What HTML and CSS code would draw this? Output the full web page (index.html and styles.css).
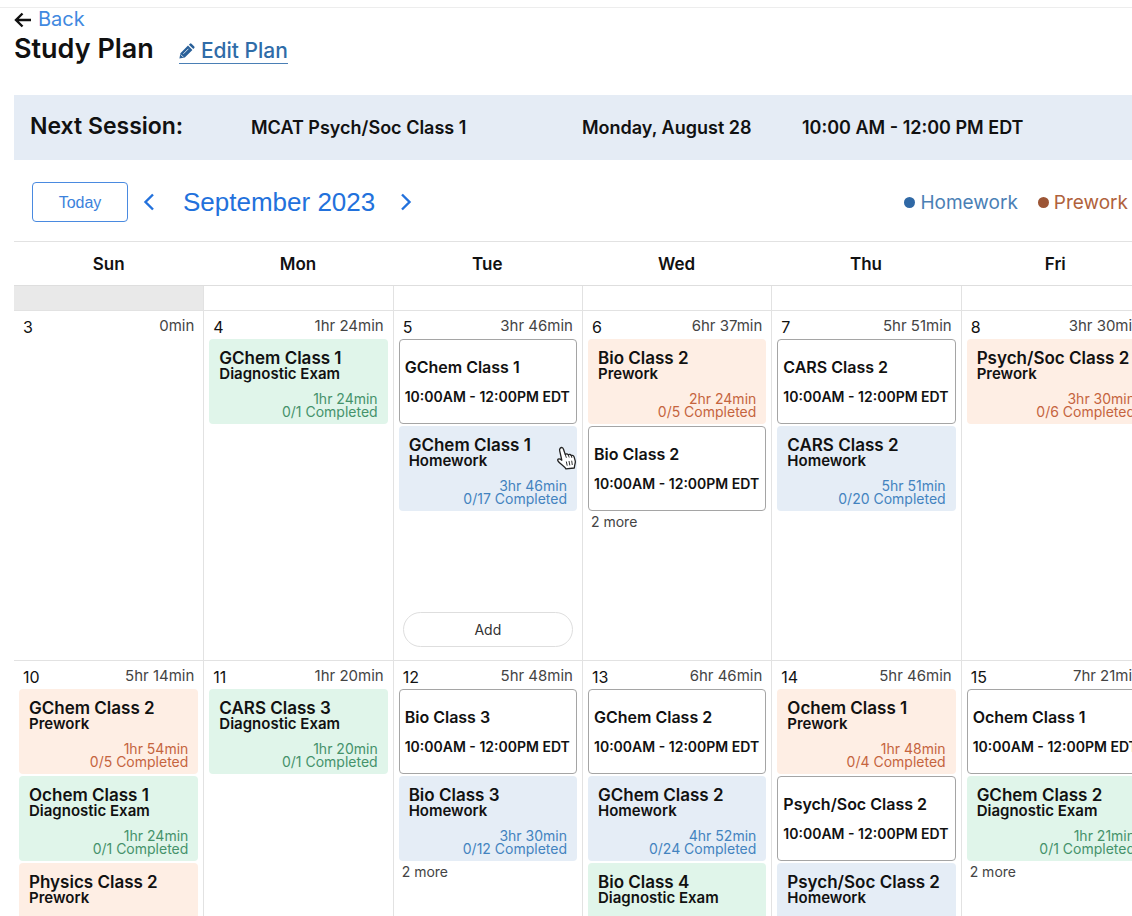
FILE: index.html
```html
<!DOCTYPE html>
<html lang="en">
<head>
    <meta charset="UTF-8">
    <meta name="viewport" content="width=device-width, initial-scale=1.0">
    <title>Study Plan</title>
    <link rel="stylesheet" href="styles.css">
</head>
<body>
    <div class="page">
        <header class="page-header">
            <a href="#" class="back-link">
                <svg class="back-icon" width="17" height="16" viewBox="0 0 17 16" fill="none" stroke="#111" stroke-width="2.4"><path d="M8.5 1.5L2 8l6.5 6.5M2 8h15"/></svg>
                Back
            </a>
            <div class="title-row">
                <h1>Study Plan</h1>
                <a href="#" class="edit-link">
                    <svg width="16" height="16" viewBox="0 0 16 16"><path fill="#2a6099" d="M0.4 15.600l1-5.400 7.600-7.600 4.400 4.400-7.600 7.600zM9.900 1.700l1-1q.8-.7 1.600 0l2.800 2.800q.7.8 0 1.600l-1 1z"/><path d="M1.800 11.600l2.600 2.600M4.400 10.800l5-5" stroke="#fff" stroke-width=".8" fill="none"/></svg>
                    Edit Plan
                </a>
            </div>
        </header>

        <section class="next-session">
            <h2>Next Session:</h2>
            <span>MCAT Psych/Soc Class 1</span>
            <span>Monday, August 28</span>
            <span>10:00 AM - 12:00 PM EDT</span>
        </section>

        <div class="toolbar">
            <button type="button" class="today">Today</button>
            <button type="button" class="arrow" aria-label="Previous month">
                <svg width="12" height="18" viewBox="0 0 12 18"><path d="M10 1.500L2.500 9l7.500 7.500"/></svg>
            </button>
            <span class="month">September 2023</span>
            <button type="button" class="arrow" aria-label="Next month">
                <svg width="12" height="18" viewBox="0 0 12 18"><path d="M2 1.500L9.500 9 2 16.500"/></svg>
            </button>
            <div class="legend">
                <span class="legend-item homework-key">Homework</span>
                <span class="legend-item prework-key">Prework</span>
            </div>
        </div>

        <table class="calendar">
            <thead>
                <tr><th>Sun</th><th>Mon</th><th>Tue</th><th>Wed</th><th>Thu</th><th>Fri</th></tr>
            </thead>
            <tbody>
                <!-- tail of the previous week -->
                <tr class="past-week">
                    <td class="outside"></td><td></td><td></td><td></td><td></td><td></td>
                </tr>
                <tr>
                    <td>
                        <div class="day">
                            <div class="day-head"><span class="date">3</span><span class="total">0min</span></div>
                        </div>
                    </td>
                    <td>
                        <div class="day">
                            <div class="day-head"><span class="date">4</span><span class="total">1hr 24min</span></div>
                            <a href="#" class="task exam"><b>GChem Class 1</b><strong>Diagnostic Exam</strong><span>1hr 24min<br>0/1 Completed</span></a>
                        </div>
                    </td>
                    <td>
                        <div class="day">
                            <div class="day-head"><span class="date">5</span><span class="total">3hr 46min</span></div>
                            <a href="#" class="session"><b>GChem Class 1</b><strong>10:00AM - 12:00PM EDT</strong></a>
                            <a href="#" class="task homework"><b>GChem Class 1</b><strong>Homework</strong><span>3hr 46min<br>0/17 Completed</span>
                                <svg class="pointer" width="21" height="24" viewBox="0 0 21 24"><path d="M4.200 2.200C5.500.9 7 1.700 7.400 3l1.900 5.600c.8-1 2.500-.9 3 .3 1-.8 2.500-.5 2.900.7 1.300-.6 2.500 0 2.900 1.300l1.200 4.300c.3 1.600-.5 3-.7 4.600l-.3 2.200-8.400.9c-1-2-3.700-3.800-5.500-5.400-1.300-1.200-3.400-2.700-2.600-4 .9-1.200 2.600-.3 4 .7L3.700 4.900c-.3-1-.2-2 .5-2.700z" fill="#fff" stroke="#222" stroke-width="1.300" stroke-linejoin="round"/><path d="M9.300 8.600l1.100 3.200M12.300 8.900l.9 2.600M15.200 9.600l.7 2.300M10.300 15.500l.9 4.200M13 15l.8 4.400M15.700 14.700l.6 4.300" fill="none" stroke="#333"/></svg>
                            </a>
                            <button type="button" class="add">Add</button>
                        </div>
                    </td>
                    <td>
                        <div class="day">
                            <div class="day-head"><span class="date">6</span><span class="total">6hr 37min</span></div>
                            <a href="#" class="task prework"><b>Bio Class 2</b><strong>Prework</strong><span>2hr 24min<br>0/5 Completed</span></a>
                            <a href="#" class="session"><b>Bio Class 2</b><strong>10:00AM - 12:00PM EDT</strong></a>
                            <a href="#" class="more">2 more</a>
                        </div>
                    </td>
                    <td>
                        <div class="day">
                            <div class="day-head"><span class="date">7</span><span class="total">5hr 51min</span></div>
                            <a href="#" class="session"><b>CARS Class 2</b><strong>10:00AM - 12:00PM EDT</strong></a>
                            <a href="#" class="task homework"><b>CARS Class 2</b><strong>Homework</strong><span>5hr 51min<br>0/20 Completed</span></a>
                        </div>
                    </td>
                    <td>
                        <div class="day">
                            <div class="day-head"><span class="date">8</span><span class="total">3hr 30min</span></div>
                            <a href="#" class="task prework"><b>Psych/Soc Class 2</b><strong>Prework</strong><span>3hr 30min<br>0/6 Completed</span></a>
                        </div>
                    </td>
                </tr>
                <tr>
                    <td>
                        <div class="day">
                            <div class="day-head"><span class="date">10</span><span class="total">5hr 14min</span></div>
                            <a href="#" class="task prework"><b>GChem Class 2</b><strong>Prework</strong><span>1hr 54min<br>0/5 Completed</span></a>
                            <a href="#" class="task exam"><b>Ochem Class 1</b><strong>Diagnostic Exam</strong><span>1hr 24min<br>0/1 Completed</span></a>
                            <a href="#" class="task prework"><b>Physics Class 2</b><strong>Prework</strong></a>
                        </div>
                    </td>
                    <td>
                        <div class="day">
                            <div class="day-head"><span class="date">11</span><span class="total">1hr 20min</span></div>
                            <a href="#" class="task exam"><b>CARS Class 3</b><strong>Diagnostic Exam</strong><span>1hr 20min<br>0/1 Completed</span></a>
                        </div>
                    </td>
                    <td>
                        <div class="day">
                            <div class="day-head"><span class="date">12</span><span class="total">5hr 48min</span></div>
                            <a href="#" class="session"><b>Bio Class 3</b><strong>10:00AM - 12:00PM EDT</strong></a>
                            <a href="#" class="task homework"><b>Bio Class 3</b><strong>Homework</strong><span>3hr 30min<br>0/12 Completed</span></a>
                            <a href="#" class="more">2 more</a>
                        </div>
                    </td>
                    <td>
                        <div class="day">
                            <div class="day-head"><span class="date">13</span><span class="total">6hr 46min</span></div>
                            <a href="#" class="session"><b>GChem Class 2</b><strong>10:00AM - 12:00PM EDT</strong></a>
                            <a href="#" class="task homework"><b>GChem Class 2</b><strong>Homework</strong><span>4hr 52min<br>0/24 Completed</span></a>
                            <a href="#" class="task exam"><b>Bio Class 4</b><strong>Diagnostic Exam</strong></a>
                        </div>
                    </td>
                    <td>
                        <div class="day">
                            <div class="day-head"><span class="date">14</span><span class="total">5hr 46min</span></div>
                            <a href="#" class="task prework"><b>Ochem Class 1</b><strong>Prework</strong><span>1hr 48min<br>0/4 Completed</span></a>
                            <a href="#" class="session"><b>Psych/Soc Class 2</b><strong>10:00AM - 12:00PM EDT</strong></a>
                            <a href="#" class="task homework"><b>Psych/Soc Class 2</b><strong>Homework</strong></a>
                        </div>
                    </td>
                    <td>
                        <div class="day">
                            <div class="day-head"><span class="date">15</span><span class="total">7hr 21min</span></div>
                            <a href="#" class="session"><b>Ochem Class 1</b><strong>10:00AM - 12:00PM EDT</strong></a>
                            <a href="#" class="task exam"><b>GChem Class 2</b><strong>Diagnostic Exam</strong><span>1hr 21min<br>0/1 Completed</span></a>
                            <a href="#" class="more">2 more</a>
                        </div>
                    </td>
                </tr>
            </tbody>
        </table>
    </div>
</body>
</html>
```

FILE: styles.css
```css
* {
    box-sizing: border-box;
}
body {
    margin: 0;
    height: 100vh;
    overflow: hidden;
    background-color: #fff;
    color: #111;
    font-family: Inter, "Liberation Sans", sans-serif;
}
a {
    color: inherit;
    text-decoration: none;
}
button {
    font-family: inherit;
    background-color: #fff;
    cursor: pointer;
}
h1, h2 {
    margin: 0;
    font-weight: 600;
}
.page {
    margin-top: 7px;
    padding-left: 14px;
    border-top: 1px solid #ededed;
}

/* Header */
.page-header {
    padding-bottom: 28px;
}
.back-link {
    display: flex;
    align-items: center;
    gap: 7px;
    line-height: 23px;
    font-size: 20px;
    color: #4189e0;
}
.title-row {
    display: flex;
    align-items: center;
    gap: 25px;
}
h1 {
    font-size: 27px;
    line-height: 36px;
}
.edit-link {
    display: flex;
    align-items: center;
    gap: 6px;
    margin-top: 5px;
    border-bottom: 1px solid #4a7fb5;
    font-size: 21px;
    font-weight: 500;
    line-height: 24px;
    color: #2f6ca8;
}

/* Next session */
.next-session {
    display: grid;
    grid-template-columns: 221px 331px 220px 1fr;
    align-items: center;
    height: 65px;
    padding-left: 16px;
    background-color: #e5ecf5;
    font-size: 18px;
    font-weight: 600;
    white-space: nowrap;
}
.next-session h2 {
    font-size: 23px;
    padding-bottom: 4px;
}

/* Toolbar */
.toolbar {
    display: flex;
    align-items: center;
    height: 81px;
    padding: 3px 4px 0 18px;
    color: #2271dc;
    font-family: "Liberation Sans", sans-serif;
}
.today {
    width: 96px;
    height: 40px;
    padding-top: 2px;
    border: 1px solid #4a8ae0;
    border-radius: 4px;
    color: #3c82dc;
    font-size: 16px;
}
.arrow {
    display: flex;
    padding: 0 15px;
    border: none;
}
.arrow svg {
    fill: none;
    stroke: #2271dc;
    stroke-width: 2.4;
}
.month {
    margin: 0 10px 0 13px;
    font-size: 26px;
}
.legend {
    display: flex;
    gap: 20px;
    margin-left: auto;
    font-family: Inter, "Liberation Sans", sans-serif;
    font-size: 19px;
}
.legend-item {
    display: flex;
    align-items: center;
    gap: 5px;
}
.legend-item::before {
    content: "";
    width: 11px;
    height: 11px;
    border-radius: 50%;
}
.homework-key {
    color: #4a80b5;
}
.homework-key::before {
    background-color: #2f68a5;
}
.prework-key {
    color: #b0623c;
}
.prework-key::before {
    background-color: #9c5535;
}

/* Calendar, runs past the right edge of the window */
.calendar {
    width: calc(100% + 18px);
    table-layout: fixed;
    border-spacing: 0;
    border-top: 1px solid #e2e2e2;
}
.calendar th {
    height: 44px;
    padding: 0;
    border-bottom: 1px solid #dedede;
    font-size: 17px;
    font-weight: 600;
}
.calendar td {
    padding: 0;
    border-left: 1px solid #e2e2e2;
    border-bottom: 1px solid #e2e2e2;
    vertical-align: top;
}
.calendar td:first-child {
    border-left: none;
}
.calendar .past-week td {
    height: 25px;
}
.calendar .outside {
    background-color: #e9e9e9;
}
.day {
    display: flex;
    flex-direction: column;
    gap: 2px;
    min-height: 349px;
    padding: 0 5px;
}
.day-head {
    display: flex;
    justify-content: space-between;
    padding: 5px 4px 0;
    margin-bottom: -2px;
}
.date {
    font-size: 16px;
    line-height: 23px;
}
.total {
    font-size: 15px;
    line-height: 20px;
    color: #444;
}
.task, .session {
    display: flex;
    flex-direction: column;
    height: 85px;
    border-radius: 4px;
    white-space: nowrap;
}
.task {
    position: relative;
    padding: 10px 10px 6px;
}
.task b {
    font-size: 17px;
    font-weight: 600;
    line-height: 18px;
}
.task strong {
    font-size: 15px;
    font-weight: 600;
    line-height: 13px;
}
.task span {
    margin-top: 12px;
    font-size: 14px;
    line-height: 13px;
    text-align: right;
}
.exam {
    background-color: #e0f5ea;
}
.exam span {
    color: #45926a;
}
.prework {
    background-color: #feeee4;
}
.prework span {
    color: #c5643e;
}
.homework {
    background-color: #e5edf6;
}
.homework span {
    color: #4383bf;
}
.session {
    gap: 13px;
    padding: 18px 5px;
    border: 1px solid #a5a5a5;
}
.session b {
    font-size: 16px;
    font-weight: 600;
    line-height: 18px;
}
.session strong {
    font-size: 14px;
    font-weight: 600;
    line-height: 15px;
}
.more {
    padding-left: 3px;
    font-size: 14px;
    line-height: 18px;
    color: #444;
}
.add {
    height: 35px;
    margin: auto 4px 13px;
    border: 1px solid #dedede;
    border-radius: 18px;
    color: #333;
    font-size: 14px;
}
.pointer {
    position: absolute;
    top: 20px;
    right: 0;
}
```
